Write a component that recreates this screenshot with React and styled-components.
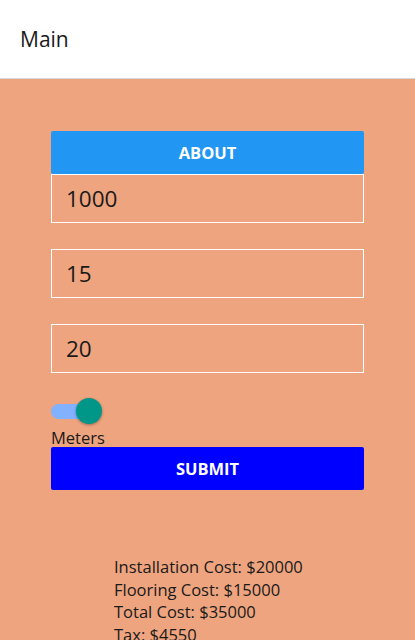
import React, { useState } from "react";
import styled, { createGlobalStyle } from "styled-components";

const Global = createGlobalStyle`
  html, body { margin: 0; padding: 0; background: #EEA47F; }
  body { font-family: "Open Sans", "Noto Sans", sans-serif; color: #1a1a1a; }
  * { box-sizing: border-box; }
`;

const Header = styled.header`
  height: 79px;
  background: #fff;
  border-bottom: 1px solid #d9d9d9;
  display: flex;
  align-items: center;
  padding-left: 20px;
  font-size: 21px;
  font-weight: 500;
  color: #1a1a1a;
`;

const Main = styled.main`
  padding: 52px 51px 0 51px;
  display: flex;
  flex-direction: column;
`;

const Button = styled.button`
  height: 43px;
  width: 100%;
  border: none;
  border-radius: 2px;
  background: ${(p) => p.$bg};
  color: #fff;
  font-family: inherit;
  font-weight: 700;
  font-size: 16.5px;
  text-transform: uppercase;
`;

const Input = styled.input`
  height: 49px;
  width: 100%;
  background: transparent;
  border: 1px solid #fff;
  padding: 0 14px;
  font-family: inherit;
  font-size: 22.5px;
  color: #1a1a1a;
  outline: none;
  margin-bottom: ${(p) => p.$mb || 0}px;
`;

const ToggleWrap = styled.div`
  position: relative;
  width: 52px;
  height: 28px;
  margin-top: 24px;
  display: flex;
  align-items: center;
`;

const Track = styled.div`
  width: 40px;
  height: 15px;
  border-radius: 8px;
  background: #82B1FF;
`;

const Thumb = styled.div`
  position: absolute;
  left: 25px;
  top: 1px;
  width: 26px;
  height: 26px;
  border-radius: 50%;
  background: #009688;
  box-shadow: 0 1px 3px rgba(0,0,0,0.35);
`;

const Label = styled.div`
  font-size: 16.5px;
  line-height: 19px;
  margin-top: 3px;
  margin-bottom: 0;
`;

const Results = styled.div`
  margin-top: 66px;
  padding-left: 63px;
  font-size: 16.5px;
  line-height: 22.5px;
`;

export default function App() {
  const [a, setA] = useState("1000");
  const [b, setB] = useState("15");
  const [c, setC] = useState("20");
  return (
    <>
      <Global />
      <Header>Main</Header>
      <Main>
        <Button $bg="#2196F3">About</Button>
        <Input $mb={26} value={a} onChange={(e) => setA(e.target.value)} />
        <Input $mb={26} value={b} onChange={(e) => setB(e.target.value)} />
        <Input value={c} onChange={(e) => setC(e.target.value)} />
        <ToggleWrap>
          <Track />
          <Thumb />
        </ToggleWrap>
        <Label>Meters</Label>
        <Button $bg="#0000FF">Submit</Button>
        <Results>
          <div>Installation Cost: $20000</div>
          <div>Flooring Cost: $15000</div>
          <div>Total Cost: $35000</div>
          <div>Tax: $4550</div>
        </Results>
      </Main>
    </>
  );
}
